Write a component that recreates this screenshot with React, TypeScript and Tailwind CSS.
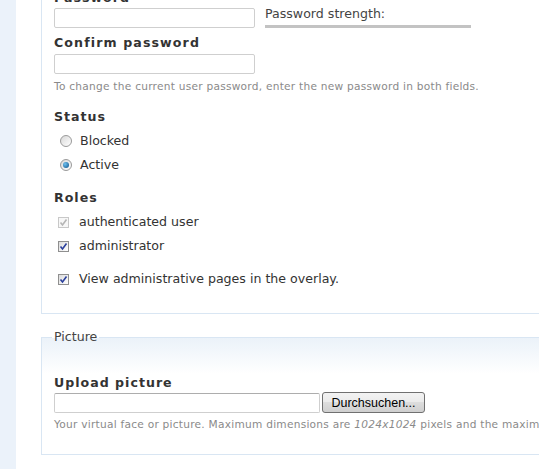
import React from "react";

function Radio({ checked }: { checked?: boolean }) {
  return (
    <span className="inline-flex h-[12px] w-[12px] items-center justify-center rounded-full border border-[#9a9a9a] bg-[linear-gradient(135deg,#d8d8d8,#ffffff)]">
      {checked && (
        <span className="h-[6px] w-[6px] rounded-full bg-[radial-gradient(circle_at_35%_35%,#6fc1f0,#0a4f86)]" />
      )}
    </span>
  );
}

function Check({ disabled }: { disabled?: boolean }) {
  return (
    <span
      className={
        disabled
          ? "inline-flex h-[11px] w-[11px] items-center justify-center border border-[#c8c8c8] bg-[#f7f7f7]"
          : "inline-flex h-[11px] w-[11px] items-center justify-center border border-[#8f8f8f] bg-[linear-gradient(135deg,#dcdcdc,#ffffff)]"
      }
    >
      <svg width="9" height="9" viewBox="0 0 9 9">
        <path
          d="M1.5 4.5 L3.5 7 L7.5 1.5"
          fill="none"
          stroke={disabled ? "#b5b5b5" : "#2a3f9c"}
          strokeWidth="1.6"
        />
      </svg>
    </span>
  );
}

export default function App() {
  return (
    <div className="flex min-h-[469px] overflow-hidden bg-white font-['DejaVu_Sans',Verdana,sans-serif] text-[12.6px] text-[#333]">
      <div className="w-[16px] shrink-0 bg-[#ebf2fa]" />

      <div className="ml-[25px] flex w-[620px] shrink-0 flex-col">
        {/* ACCOUNT */}
        <div className="mt-[-10px] border-b border-l border-r border-[#d9e6f3] px-[12px] pb-[26px]">
          <div className="h-[16px] font-bold leading-[16px] tracking-[1px]">Password</div>
          <div className="mt-[2px] flex items-start gap-[10px]">
            <div className="h-[20px] w-[201px] rounded-[2px] border border-[#cfcfcf]" />
            <div className="w-[206px]">
              <div className="mt-[-2px] h-[16px] leading-[16px] text-[#444]">Password strength:</div>
              <div className="mt-[3px] h-[3px] bg-[#c3c3c3]" />
            </div>
          </div>

          <div className="mt-[7px] h-[16px] font-bold leading-[16px] tracking-[1.1px]">Confirm password</div>
          <div className="mt-[3px] h-[20px] w-[201px] rounded-[2px] border border-[#cfcfcf]" />
          <div className="mt-[6px] h-[12px] text-[10.6px] leading-[12px] tracking-[0.25px] text-[#8a8a8a]">
            To change the current user password, enter the new password in both fields.
          </div>

          <div className="mt-[17px] h-[16px] font-bold leading-[16px] tracking-[1px]">Status</div>
          <div className="mt-[8px] flex h-[16px] items-center gap-[8px] pl-[6px]">
            <Radio />
            <span>Blocked</span>
          </div>
          <div className="mt-[8px] flex h-[16px] items-center gap-[8px] pl-[6px]">
            <Radio checked />
            <span>Active</span>
          </div>

          <div className="mt-[17px] h-[16px] font-bold leading-[16px] tracking-[1px]">Roles</div>
          <div className="mt-[8px] flex h-[16px] items-center gap-[10px] pl-[4px]">
            <Check disabled />
            <span>authenticated user</span>
          </div>
          <div className="mt-[8px] flex h-[16px] items-center gap-[10px] pl-[4px]">
            <Check />
            <span>administrator</span>
          </div>
          <div className="mt-[17px] flex h-[16px] items-center gap-[10px] pl-[4px]">
            <Check />
            <span>View administrative pages in the overlay.</span>
          </div>
        </div>

        {/* PICTURE */}
        <fieldset className="mt-[15px] border border-[#d9e6f3] bg-[linear-gradient(#ebf2f9,#ffffff_36px)] px-[12px] pb-[24px]">
          <legend className="ml-[-2px] px-[2px] leading-[16px] text-[#444]">Picture</legend>
          <div className="mt-[30px] h-[16px] font-bold leading-[16px] tracking-[1px]">Upload picture</div>
          <div className="mt-[1px] flex items-center gap-[2px]">
            <div className="h-[20px] w-[266px] rounded-[2px] border border-[#cfcfcf] border-t-[#adadad] bg-white" />
            <button className="h-[21px] w-[103px] rounded-[3px] border border-[#707070] bg-[linear-gradient(#f3f3f3,#ebebeb_45%,#dddddd_50%,#cfcfcf)] font-['Liberation_Sans',Arial,sans-serif] text-[12.5px] leading-[18px] text-black">
              Durchsuchen...
            </button>
          </div>
          <div className="mt-[5px] h-[12px] whitespace-nowrap text-[10.6px] leading-[12px] tracking-[0.25px] text-[#8a8a8a]">
            Your virtual face or picture. Maximum dimensions are <em>1024x1024</em> pixels and the maximum size is 30 KB.
          </div>
        </fieldset>
      </div>
    </div>
  );
}
